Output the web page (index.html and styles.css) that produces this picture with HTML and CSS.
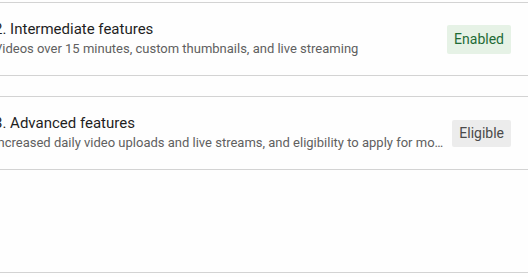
FILE: index.html
```html
<!DOCTYPE html>
<html lang="en">

<head>
    <meta charset="UTF-8">
    <meta name="viewport" content="width=device-width, initial-scale=1.0">
    <title>Feature eligibility</title>
    <link rel="stylesheet" href="styles.css">
</head>

<body>
    <div class="feature-list">
        <div class="feature-item">
            <div class="feature-text">
                <div class="feature-title">2. Intermediate features</div>
                <div class="feature-desc">Videos over 15 minutes, custom thumbnails, and live streaming</div>
            </div>
            <span class="badge badge-enabled">Enabled</span>
        </div>
        <div class="feature-item">
            <div class="feature-text">
                <div class="feature-title">3. Advanced features</div>
                <div class="feature-desc">Increased daily video uploads and live streams, and eligibility to apply for monetization and more</div>
            </div>
            <span class="badge badge-eligible">Eligible</span>
        </div>
        <div class="feature-spacer"></div>
        <div class="feature-next"></div>
    </div>
</body>

</html>
```

FILE: styles.css
```css
body {
    font-family: Roboto, "Noto Sans", Arial, sans-serif;
    background-color: #fefefe;
    margin: 0;
    padding: 0;
    overflow: hidden;
}

.feature-list {
    margin-left: -22px;
    padding-top: 2px;
}

.feature-item {
    display: flex;
    align-items: center;
    gap: 8px;
    padding: 16px 17px 16px 16px;
    border-top: 1px solid #d3d3d3;
    border-bottom: 1px solid #d3d3d3;
    margin-bottom: 20px;
}

.feature-text {
    flex: 1;
    min-width: 0;
}

.feature-title {
    font-size: 15px;
    line-height: 20px;
    color: #1f1f1f;
}

.feature-desc {
    font-size: 13px;
    line-height: 20px;
    color: #606060;
    white-space: nowrap;
    overflow: hidden;
    text-overflow: ellipsis;
}

.badge {
    font-size: 14px;
    line-height: 17px;
    padding: 6px 7px;
    border-radius: 2px;
    white-space: nowrap;
}

.badge-enabled {
    background-color: #e6f2e6;
    color: #1e6b35;
}

.badge-eligible {
    background-color: #ececec;
    color: #4a4a4a;
    padding: 5px 7px;
}

.feature-spacer {
    height: 82px;
}

.feature-next {
    border-top: 1px solid #d3d3d3;
}
```
